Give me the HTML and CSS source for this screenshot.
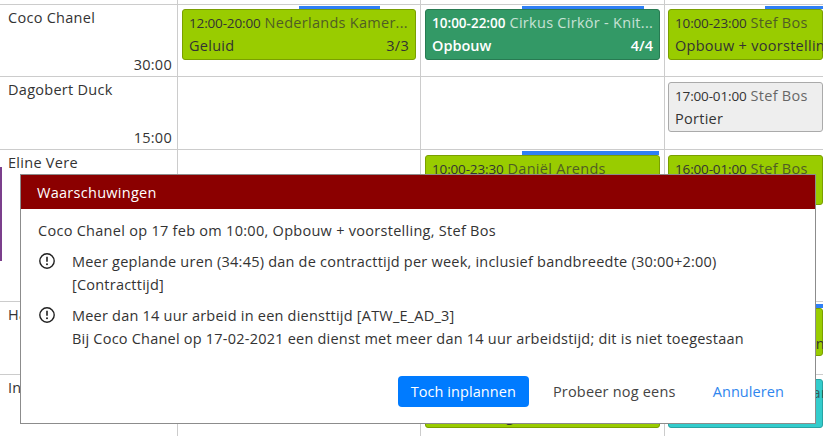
FILE: index.html
```html
<!DOCTYPE html>
<html lang="nl">
<head>
    <meta charset="UTF-8">
    <title>Rooster</title>
    <link rel="stylesheet" href="styles.css">
</head>
<body>
    <div class="side-strip"></div>

    <!-- Rooster -->
    <div class="roster">
        <div class="row row-top">
            <div class="cell name-cell"></div>
            <div class="cell"></div>
            <div class="cell"></div>
            <div class="cell"></div>
        </div>

        <div class="row row-first">
            <div class="cell name-cell">
                <span class="name">Coco Chanel</span>
                <span class="hours">30:00</span>
            </div>
            <div class="cell">
                <div class="shift green">
                    <span class="mark" style="left: 116px; width: 81px"></span>
                    <div class="shift-top"><span class="time">12:00-20:00</span><span class="what">Nederlands Kamer...</span></div>
                    <div class="shift-bottom"><span>Geluid</span><span>3/3</span></div>
                </div>
            </div>
            <div class="cell">
                <div class="shift dark">
                    <span class="mark" style="left: 96px; width: 122px"></span>
                    <div class="shift-top"><span class="time">10:00-22:00</span><span class="what">Cirkus Cirkör - Knit...</span></div>
                    <div class="shift-bottom"><span>Opbouw</span><span>4/4</span></div>
                </div>
            </div>
            <div class="cell">
                <div class="shift green">
                    <span class="mark" style="left: 96px; width: 122px"></span>
                    <div class="shift-top"><span class="time">10:00-23:00</span><span class="what">Stef Bos</span></div>
                    <div class="shift-bottom"><span>Opbouw + voorstelling</span></div>
                </div>
            </div>
        </div>

        <div class="row row-normal">
            <div class="cell name-cell">
                <span class="name">Dagobert Duck</span>
                <span class="hours">15:00</span>
            </div>
            <div class="cell"></div>
            <div class="cell"></div>
            <div class="cell">
                <div class="shift grey">
                    <div class="shift-top"><span class="time">17:00-01:00</span><span class="what">Stef Bos</span></div>
                    <div class="shift-bottom"><span>Portier</span></div>
                </div>
            </div>
        </div>

        <div class="row row-tall">
            <div class="cell name-cell">
                <span class="name">Eline Vere</span>
            </div>
            <div class="cell"></div>
            <div class="cell">
                <div class="shift green">
                    <span class="mark mark-tall" style="left: 96px; width: 137px"></span>
                    <div class="shift-top"><span class="time">10:00-23:30</span><span class="what">Daniël Arends</span></div>
                </div>
            </div>
            <div class="cell">
                <div class="shift green">
                    <div class="shift-top"><span class="time">16:00-01:00</span><span class="what">Stef Bos</span></div>
                </div>
            </div>
        </div>

        <div class="row row-normal">
            <div class="cell name-cell">
                <span class="name">Hans Klok</span>
            </div>
            <div class="cell"></div>
            <div class="cell"></div>
            <div class="cell">
                <div class="shift green shift-low">
                    <span class="mark mark-tall" style="left: 96px; width: 122px"></span>
                    <div class="shift-top"></div>
                    <div class="shift-bottom"><span>Opbouw + voorstelling</span></div>
                </div>
            </div>
        </div>

        <div class="row row-last">
            <div class="cell name-cell">
                <span class="name">Ingrid Jansen</span>
            </div>
            <div class="cell"></div>
            <div class="cell">
                <div class="shift green">
                    <div class="shift-top"></div>
                    <div class="shift-bottom"><span>Technisch geluid</span></div>
                </div>
            </div>
            <div class="cell">
                <div class="shift teal">
                    <div class="shift-top"><span class="time">10:00-23:00</span><span class="what">Ronald Karsten</span></div>
                </div>
            </div>
        </div>
    </div>

    <!-- Waarschuwingen dialog -->
    <div class="dialog">
        <div class="dialog-title">Waarschuwingen</div>
        <div class="dialog-body">
            <p class="intro">Coco Chanel op 17 feb om 10:00, Opbouw + voorstelling, Stef Bos</p>
            <div class="warning">
                <svg class="warning-icon" viewBox="0 0 16 16" width="16" height="16">
                    <circle cx="8" cy="8" r="7.2" fill="none" stroke="#212121" stroke-width="1.4"/>
                    <path d="M8 3.8v5" fill="none" stroke="#212121" stroke-width="1.6"/>
                    <circle cx="8" cy="11.3" r="1" fill="#212121"/>
                </svg>
                <div>Meer geplande uren (34:45) dan de contracttijd per week, inclusief bandbreedte (30:00+2:00) [Contracttijd]</div>
            </div>
            <div class="warning">
                <svg class="warning-icon" viewBox="0 0 16 16" width="16" height="16">
                    <circle cx="8" cy="8" r="7.2" fill="none" stroke="#212121" stroke-width="1.4"/>
                    <path d="M8 3.8v5" fill="none" stroke="#212121" stroke-width="1.6"/>
                    <circle cx="8" cy="11.3" r="1" fill="#212121"/>
                </svg>
                <div>Meer dan 14 uur arbeid in een diensttijd [ATW_E_AD_3]<br>Bij Coco Chanel op 17-02-2021 een dienst met meer dan 14 uur arbeidstijd; dit is niet toegestaan</div>
            </div>
        </div>
        <div class="dialog-actions">
            <button class="btn btn-primary">Toch inplannen</button>
            <button class="btn btn-plain">Probeer nog eens</button>
            <button class="btn btn-link">Annuleren</button>
        </div>
    </div>
</body>
</html>
```

FILE: styles.css
```css
html, body {
    height: 100%;
}

body {
    margin: 0;
    overflow: hidden;
    background-color: #fff;
    color: #333;
    font-family: "Open Sans", "Noto Sans", sans-serif;
    font-size: 14.5px;
    letter-spacing: 0.28px;
    position: relative;
}

.side-strip {
    position: absolute;
    left: 0;
    top: 167px;
    width: 2px;
    height: 94px;
    background-color: #7b3f8c;
}

/* Rooster */
.roster {
    height: 100%;
    display: flex;
    flex-direction: column;
}

.row {
    display: grid;
    grid-template-columns: 178px 243px 244px 1fr;
    border-bottom: 1px solid #ccc;
}

.row-top { height: 4px; }
.row-first { height: 71px; }
.row-normal { height: 72px; }
.row-tall { height: 151px; }
.row-last { flex: 1; border-bottom: 0; }

.cell {
    border-right: 1px solid #ccc;
    padding: 5px 4px 0;
    min-width: 0;
}

.row-first .cell,
.row-last .cell {
    padding-top: 4px;
}

.cell:last-child {
    border-right: 0;
    padding-left: 3px;
    padding-right: 0;
}

.cell.name-cell {
    display: flex;
    flex-direction: column;
    justify-content: space-between;
    padding: 0 5px 1px 8px;
}

.name {
    line-height: 26px;
}

.hours {
    text-align: right;
    line-height: 20px;
}

/* Diensten */
.shift {
    position: relative;
    height: 50px;
    box-sizing: border-box;
    padding: 2px 6px 0;
    border: 1px solid;
    border-radius: 3px;
}

.row-first .shift {
    height: 51px;
}

.row-last .shift {
    height: 49px;
}

.shift-low {
    margin-top: 1px;
    height: 48px;
    padding-top: 1px;
}

.mark {
    position: absolute;
    top: -4px;
    height: 3px;
    background-color: #2f7ff5;
}

.mark-tall {
    top: -5px;
    height: 4px;
}

.shift-top {
    display: flex;
    gap: 4px;
    height: 22px;
    line-height: 22px;
    white-space: nowrap;
}

.time {
    font-size: 13.5px;
    letter-spacing: -0.15px;
}

.what {
    opacity: 0.72;
}

.shift-bottom {
    display: flex;
    justify-content: space-between;
    line-height: 23px;
    white-space: nowrap;
}

.green {
    background-color: #99cc00;
    border-color: #7a9f00;
}

.dark {
    background-color: #339966;
    border-color: #287a52;
    color: #fff;
}

.dark .time,
.dark .shift-bottom {
    font-weight: 600;
    letter-spacing: 0;
}

.grey {
    background-color: #eee;
    border-color: #aaa;
}

.teal {
    background-color: #33cccc;
    border-color: #29a3a3;
}

/* Dialog */
.dialog {
    position: absolute;
    left: 20px;
    top: 174px;
    width: 794px;
    height: 248px;
    border: 1px solid #8c8c8c;
    background-color: #fff;
    display: flex;
    flex-direction: column;
}

.dialog-title {
    background-color: #8b0000;
    color: #fff;
    height: 34px;
    line-height: 36px;
    padding-left: 16px;
}

.dialog-body {
    flex: 1;
    padding: 10px 17px 0;
}

.intro {
    margin: 0 0 8px;
    line-height: 23px;
}

.warning {
    display: flex;
    gap: 17px;
    margin-bottom: 8px;
    padding-left: 1px;
    line-height: 23px;
    letter-spacing: 0.22px;
}

.warning-icon {
    flex: none;
    margin-top: 3px;
}

.dialog-actions {
    display: flex;
    align-items: center;
    justify-content: flex-end;
    padding: 0 18px 16px 0;
}

.btn {
    height: 31px;
    border: 0;
    border-radius: 4px;
    background: none;
    padding: 0 13px;
    font: inherit;
    letter-spacing: 0.2px;
}

.btn-primary {
    background-color: #007bff;
    color: #fff;
    font-weight: 500;
    letter-spacing: 0.07px;
}

.btn-plain {
    color: #444;
    margin-left: 11px;
}

.btn-link {
    color: #2f86ee;
    margin-left: 11px;
    letter-spacing: 0.08px;
}
```
